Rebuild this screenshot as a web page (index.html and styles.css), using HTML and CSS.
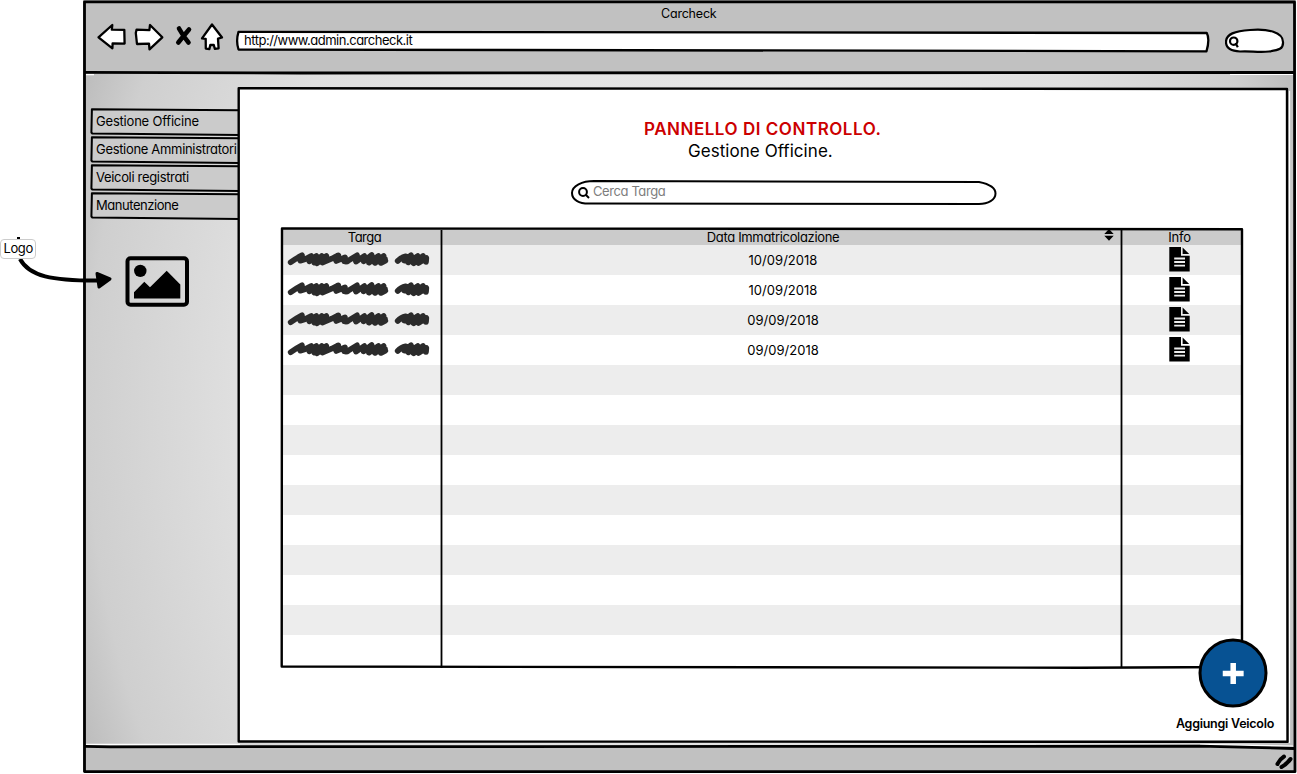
FILE: index.html
```html
<!DOCTYPE html>
<html lang="it">
<head>
<meta charset="utf-8">
<title>Carcheck</title>
<link rel="stylesheet" href="styles.css">
</head>
<body>
<svg class="defs" aria-hidden="true">
  <symbol id="scribble" viewBox="24 75 474 90">
    <path d="M47 127Q62 116 81 106Q72 114 76 122Q92 118 109 108Q100 117 103 124L124 108L118 128L140 108L126 130L154 108L142 128L170 116L190 106Q180 114 184 123L210 112Q204 118 208 124Q215 126 220 122L246 106Q240 116 243 125L268 108L266 124L290 105L282 128L310 108L300 129L326 108L318 129L331 122M368 123Q378 112 392 109L388 122L408 106L400 127L428 108L416 130L444 108L430 129L454 114L453 126M112 117H152M272 117H330M404 118H452"/>
  </symbol>
  <symbol id="doc" viewBox="0 0 21 25">
    <path d="M.3 0H12V8.800H20.700V24.500H.3Z"/><path d="M13.600.4L20.200 7H13.600Z"/>
    <path class="doc-lines" d="M5.200 11.500H16M5.200 15H16M5.200 18.700H16"/>
  </symbol>
</svg>
<div class="canvas">
  <div class="window">
    <header class="chrome">
      <div class="window-title"><span>Carcheck</span></div>
      <div class="toolbar">
        <svg class="nav" width="130" height="30" viewBox="96 22 130 30">
          <path d="M98.500 37.300L112.300 25L111.800 29.700L124.300 29.800L124.600 43.600L112.600 43.500L112.400 48.300Z"/>
          <path d="M162.300 37.300L150 25L149.400 30.200L136.600 29.600L135.800 33L137 44L149 43.600L149.500 49.300Z"/>
          <path class="cross" d="M179 28.500Q183 36 188.500 42.500M189 29.500L184 35.500L178.300 42.500"/>
          <path d="M212 24.500L222 37.500L218 38.700L218.600 48.300L214.800 48.800L213.800 45H210.300L209.400 49L205.800 48.600L205.700 38.800L202 38.300Z"/>
        </svg>
        <div class="address">
          <svg class="outline" viewBox="0 0 974 22"><path d="M2.500.8L970.800 2Q974 8 970.500 20.300L2.500 18.500Q-.3 10 2.500.8Z"/></svg>
          <span>http://www.admin.carcheck.it</span>
        </div>
        <svg class="mini-search" width="60" height="26" viewBox="1225 28 60 26">
          <path class="field" d="M1226 42C1226 34 1235 31 1250 30C1268 28.500 1283 32 1283 42C1283.500 49 1279 50 1269 51.500C1258 53 1250 50.500 1240 51.500C1231 51 1226 48 1226 42Z"/>
          <circle cx="1233.700" cy="41.200" r="3.700"/><path d="M1235.500 43L1237.800 47.300"/>
        </svg>
      </div>
    </header>
    <div class="body">
      <aside class="sidebar">
        <nav class="tabs">
          <a class="tab"><svg class="outline" viewBox="0 0 150 28"><path d="M149 2.300L.9 1.300L.4 24.500L1.300 25.500L149 27"/></svg><span class="t1">Gestione Officine</span></a>
          <a class="tab"><svg class="outline" viewBox="0 0 150 28"><path d="M149 2.300L.9 1.300L.4 24.500L1.300 25.500L149 27"/></svg><span class="t2">Gestione Amministratori</span></a>
          <a class="tab"><svg class="outline" viewBox="0 0 150 28"><path d="M149 2.300L.9 1.300L.4 24.500L1.300 25.500L149 27"/></svg><span class="t3">Veicoli registrati</span></a>
          <a class="tab"><svg class="outline" viewBox="0 0 150 28"><path d="M149 2.300L.9 1.300L.4 24.500L1.300 25.500L149 27"/></svg><span class="t4">Manutenzione</span></a>
        </nav>
        <svg class="logo" width="64" height="51" viewBox="125 255.500 64 51">
          <rect x="127.500" y="257.700" width="59.500" height="46.500" rx="3"/>
          <circle cx="140.300" cy="270.400" r="6.200"/>
          <path d="M134 291.700L144.300 281.300L150 286.700L166.700 270.300L180.300 284V298H134Z"/>
        </svg>
      </aside>
      <main class="panel">
        <h1>PANNELLO DI CONTROLLO.</h1>
        <h2>Gestione Officine.</h2>
        <div class="search">
          <svg class="outline" viewBox="570 179 428 27"><path d="M594 181L979 182C989 184 995.500 187 995.500 193.500C995.500 200 988 204 979 204L592 203.500C578 204.500 572 199 572 193C572 186 582 181 594 181Z"/></svg>
          <svg class="glass" width="12" height="12" viewBox="0 0 12 12"><circle cx="5" cy="5" r="3.900"/><path d="M8 8L11 11"/></svg>
          <span>Cerca Targa</span>
        </div>
        <div class="table">
          <svg class="outline" viewBox="0 0 964 442"><path d="M1.700 439.500L2 1.400L962 2.200L962 440L800 440.700Z"/><path class="thin" d="M161.500 3V441"/><path class="thin" d="M841.500 3V441"/></svg>
          <div class="row head"><span class="h1">Targa</span><span class="h2">Data Immatricolazione</span><span class="h3">Info</span>
            <svg class="sort" width="10" height="12" viewBox="0 0 10 12"><path d="M.3 5L5 0L9.700 5ZM.3 6.800H9.700L5 11.800Z"/></svg></div>
          <div class="row"><svg class="ink"><use href="#scribble"/></svg><span class="date">10/09/2018</span><svg class="doc"><use href="#doc"/></svg></div>
          <div class="row"><svg class="ink"><use href="#scribble"/></svg><span class="date">10/09/2018</span><svg class="doc"><use href="#doc"/></svg></div>
          <div class="row"><svg class="ink"><use href="#scribble"/></svg><span class="date">09/09/2018</span><svg class="doc"><use href="#doc"/></svg></div>
          <div class="row"><svg class="ink"><use href="#scribble"/></svg><span class="date">09/09/2018</span><svg class="doc"><use href="#doc"/></svg></div>
          <div class="row"></div><div class="row"></div><div class="row"></div><div class="row"></div><div class="row"></div>
          <div class="row"></div><div class="row"></div><div class="row"></div><div class="row"></div><div class="row"></div>
        </div>
        <div class="add">
          <svg width="70" height="70" viewBox="0 0 70 70"><circle cx="35" cy="35" r="33"/><path d="M35.200 27.800V43.200M27.500 35.500H42.900"/></svg>
          <span>Aggiungi Veicolo</span>
        </div>
      </main>
    </div>
    <footer class="status"><svg width="18" height="15" viewBox="0 0 18 15"><path d="M2.500 10Q5 5 9 2.500M6.500 13Q12 10 15.500 5"/></svg></footer>
  </div>
  <svg class="frame" width="1297" height="774" viewBox="0 0 1297 774">
    <path class="shade" d="M1289.500 91V743M86 74.600H94M1230 74.400H1293M86 744.300H240M1200 744.300L1293 746"/>
    <path d="M84.500 1.800L1294.500 2L1295 771.700L84.500 771.500Z"/>
    <path d="M85 72.300L300 73L1294 72.500"/>
    <path d="M85 746.300L110 746.800L1200 746.200L1294 748.500"/>
    <path class="panel-line" d="M238.700 88.300L1287 89L1287.500 741.800L238.700 741.500Z"/>
  </svg>
  <div class="note">
    <span>Logo</span>
    <svg width="114" height="56" viewBox="0 236 114 56"><path d="M17 238H20"/><path class="curve" d="M20 259C29 276 51 281 101 280.500"/><path class="tip" d="M97 273.500L110 279L99 287Z"/></svg>
  </div>
</div>
</body>
</html>
```
FILE: styles.css
```css
* { box-sizing: border-box; }
body { margin: 0; background: #fff; color: #000; font: 13px/16px Inter, "Open Sans", sans-serif; font-feature-settings: "cv11" 1; overflow: hidden; }
h1, h2 { margin: 0; }
span, h1, h2 { white-space: nowrap; }
.defs { display: none; }
.canvas { position: relative; width: 1297px; height: 774px; }
.window { width: 1213px; height: 774px; margin-left: 83px; display: grid; grid-template-rows: 73px 673px 26px; }
.outline { position: absolute; inset: 0; width: 100%; height: 100%; fill: #fff; stroke: #000; stroke-width: 2; stroke-linejoin: round; z-index: 0; overflow: visible; }
.chrome { background: #c1c1c1; padding: 6px 0 0 13px; }
.window-title { padding-left: 565px; height: 16px; letter-spacing: -.2px; font-size: 12.5px; }
.toolbar { display: flex; align-items: flex-start; }
.nav { margin-right: 10px; fill: #fff; stroke: #000; stroke-width: 2.300; stroke-linejoin: round; }
.nav .cross { fill: none; stroke-width: 4.600; stroke-linecap: round; }
.address { position: relative; width: 974px; height: 22px; margin: 9px 15px 0 0; padding: 1px 0 0 8px; }
.address .outline { stroke-width: 2.300; }
.address span { position: relative; letter-spacing: -.49px; }
.mini-search { margin-top: 6px; fill: none; stroke: #000; stroke-width: 2.200; }
.mini-search .field { fill: #fff; }
.body { display: grid; grid-template-columns: 156px 1048px 9px; background: radial-gradient(ellipse 700px 900px at center, #e5e5e5 35%, #dfdfdf 65%, #d6d6d6 77%, #cfcfcf 86%, #bababa 95%); }
.sidebar { padding: 35px 0 0 8px; }
.tab { position: relative; display: block; width: 150px; height: 28px; padding: 5px 0 0 5px; }
.tab .outline { fill: #cbcbcb; }
.tab span { position: relative; }
.t1 { letter-spacing: -.2px; }
.t2 { letter-spacing: -.32px; }
.t3 { letter-spacing: -.33px; }
.t4 { letter-spacing: -.45px; }
.logo { display: block; margin: 35.500px 0 0 34px; fill: #000; }
.logo rect { fill: none; stroke: #000; stroke-width: 4; }
.panel { position: relative; background: #fff; margin: 15px 0 4px; padding: 30px 0 0 41px; z-index: 1; }
.panel h1 { color: #c00; font-size: 17px; line-height: 22px; font-weight: 600; padding-left: 364px; letter-spacing: .53px; }
.panel h2 { font-size: 17px; line-height: 22px; font-weight: 400; padding-left: 408px; letter-spacing: .05px; }
.search { position: relative; width: 428px; height: 27px; margin: 17px 0 21px 290px; display: flex; align-items: flex-start; padding: 5px 0 0 8px; }
.glass { position: relative; margin: 3px 3px 0 0; fill: none; stroke: #000; stroke-width: 2; }
.search span { position: relative; color: #7d7d7d; margin-top: -1px; letter-spacing: -.4px; }
.table { position: relative; width: 964px; height: 442px; padding: 2px 2px 0; }
.table .outline { fill: none; stroke-width: 2.400; z-index: 1; }
.table .thin { stroke-width: 1.800; }
.row { display: grid; grid-template-columns: 160px 680px 120px; height: 30px; align-items: center; justify-items: center; }
.row:nth-child(odd) { background: #ededed; }
.row.head { position: relative; height: 16px; background: #cbcbcb; }
.h1 { padding-left: 5px; letter-spacing: -.5px; }
.h2 { padding-right: 18px; letter-spacing: -.33px; }
.h3 { padding-right: 5px; letter-spacing: -.2px; }
.date { padding-left: 2px; letter-spacing: .03px; }
.sort { position: absolute; left: 822px; top: 0; }
.ink { width: 158px; height: 30px; fill: none; stroke: #2b2b2b; stroke-width: 17; stroke-linecap: round; stroke-linejoin: round; }
.doc { width: 21px; height: 25px; margin: -1px 5px 0 0; }
.doc-lines { stroke: #eee; stroke-width: 1.800; }
.add { position: absolute; right: 12px; top: 550px; display: flex; flex-direction: column; align-items: center; width: 100px; }
.add svg { margin-left: 15px; fill: #075293; stroke: #000; stroke-width: 3; z-index: 2; }
.add path { stroke: #fff; stroke-width: 5.500; stroke-linecap: square; stroke-linejoin: round; }
.add span { margin-top: 8px; font-size: 12.500px; font-weight: 600; letter-spacing: -.25px; }
.status { background: #c1c1c1; display: flex; justify-content: flex-end; padding: 8px 3px 0 0; z-index: 1; }
.status svg { fill: none; stroke: #000; stroke-width: 4; stroke-linecap: round; }
.frame { position: absolute; inset: 0; z-index: 2; pointer-events: none; fill: none; stroke: #000; stroke-width: 2.800; stroke-linejoin: round; }
.frame .shade { stroke: #fff; stroke-width: 1.200; }
.frame .panel-line { stroke-width: 2.400; }
.note { position: absolute; left: 0; top: 236px; z-index: 4; }
.note svg { display: block; fill: none; stroke: #000; stroke-width: 2; }
.note .curve { stroke-width: 4; }
.note .tip { fill: #000; stroke-width: 3; stroke-linejoin: round; }
.note span { position: absolute; left: 0; top: 3px; width: 36px; height: 20px; padding: 0 0 0 2.500px; background: #fff; border: 1px solid #ccc; border-radius: 4px; letter-spacing: -.4px; }
```
